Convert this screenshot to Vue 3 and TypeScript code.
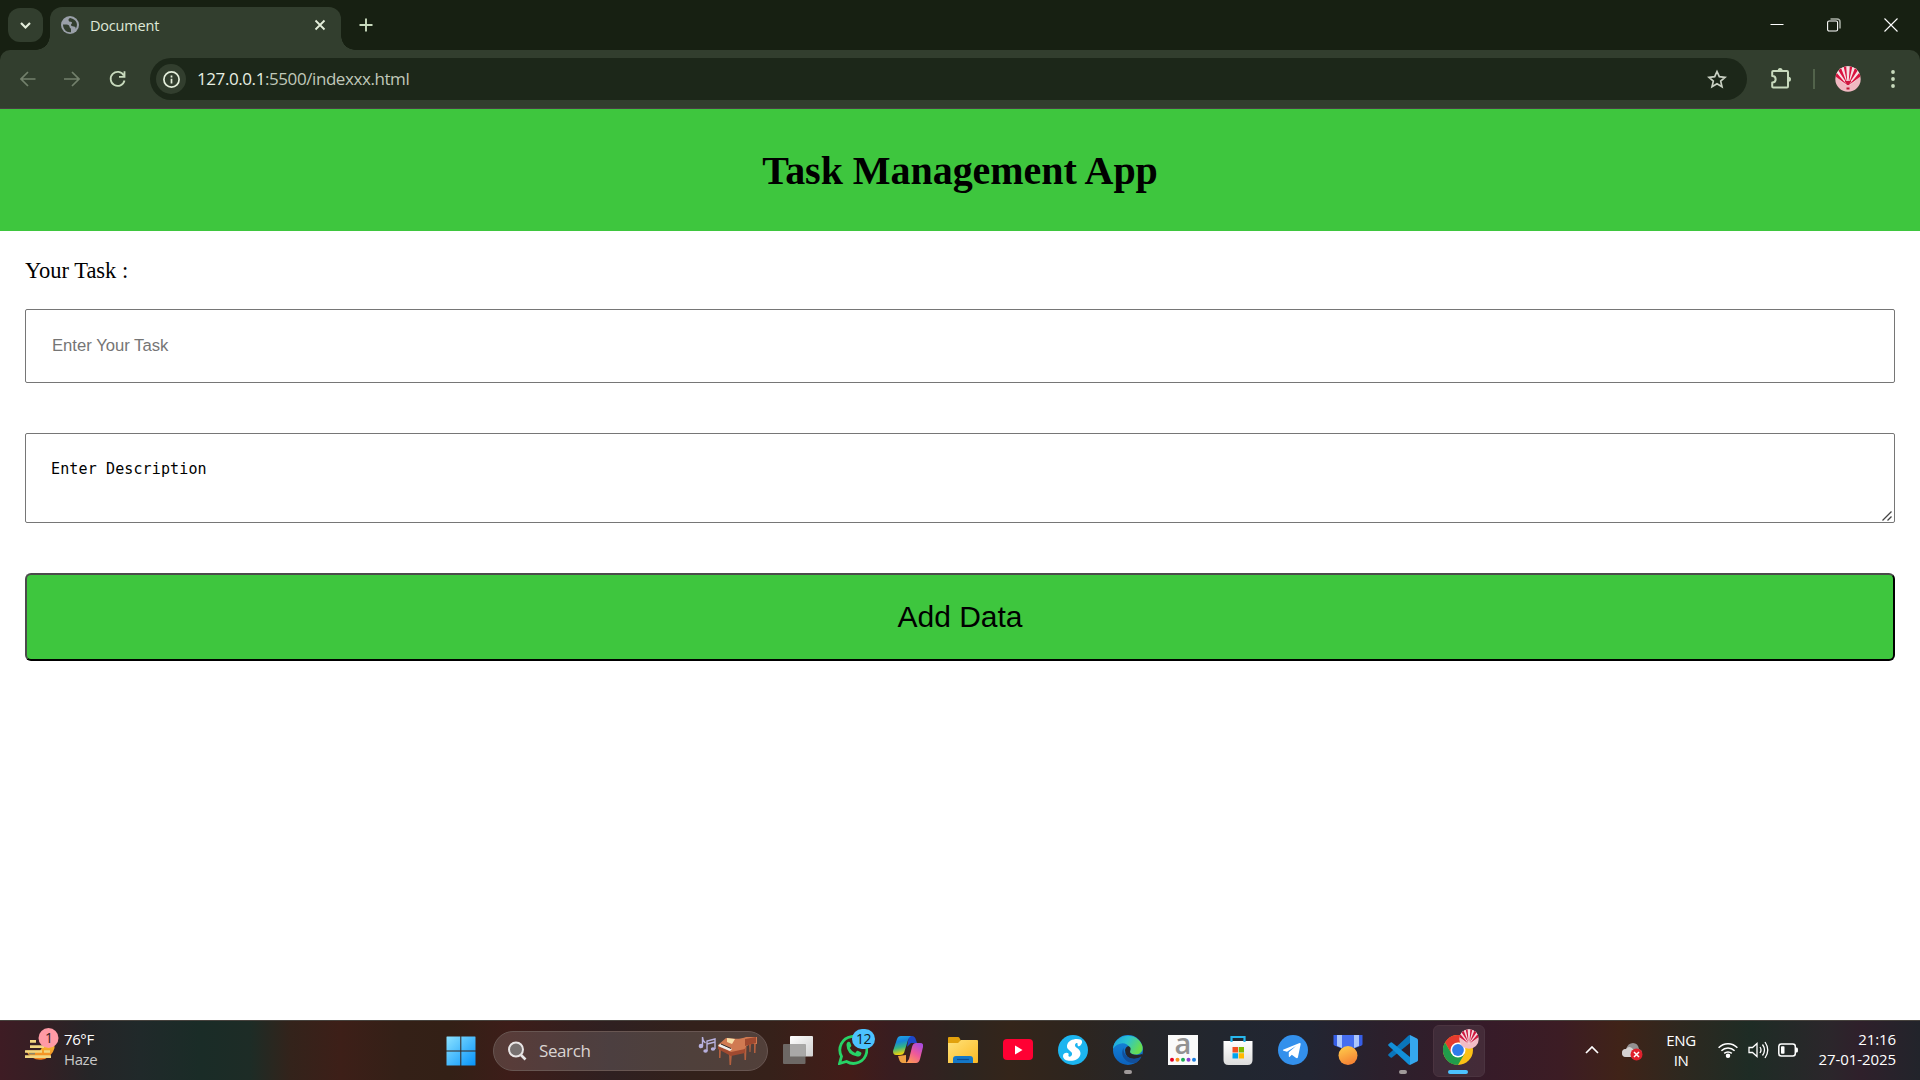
<script setup lang="ts">
import { ref } from 'vue'

const task = ref('')
const description = ref('Enter Description')
const dots = ['#e60023', '#f7931e', '#1aab54', '#8a3fd1', '#1a7fe0']
</script>

<template>
  <div class="screen">
    <div class="tabstrip">
      <button class="tabsearch"><svg width="35" height="34" viewBox="0 0 35 34"><path d="M13 15l4.500 4.500L22 15" fill="none" stroke="#e4eedb" stroke-width="2.200" /></svg></button>
      <div class="tab">
        <svg class="globe" width="18" height="18" viewBox="0 0 18 18"><circle cx="9" cy="9" r="9" fill="#9aa0a9" /><path d="M2 8.500h3.500c2 0 3 1 3 2.300 0 1.400 1.500 1 1.500 2.600v2.800c-4.500.6-8-3-8-7.700zM9.200 2C7.500 2.600 7 4 8 5.200c1 1.100 2.500.2 3 1.300.5 1.200-1.500 1.400-1 2.800.5 1.300 2.600.8 3.800 1.500 1 .6 1 1.400.8 2.200C17.500 9 16 3.500 9.200 2z" fill="#323e2e" /></svg>
        <span class="tabtitle">Document</span>
        <svg class="tabclose" width="12" height="12" viewBox="0 0 12 12"><path d="M1.500 1.500l9 9M10.500 1.500l-9 9" stroke="#e4eedb" stroke-width="1.800" /></svg>
      </div>
      <svg class="plus" width="14" height="14" viewBox="0 0 14 14"><path d="M7 .5v13M.5 7h13" stroke="#c8dabd" stroke-width="1.900" /></svg>
      <div class="wincontrols">
        <svg width="14" height="14" viewBox="0 0 14 14"><path d="M.5 6.500h13" stroke="#fff" /></svg>
        <svg width="14" height="14" viewBox="0 0 14 14"><path d="M3.500 1H10q3 0 3 3v6.500" fill="none" stroke="#aab0a7" stroke-width="1.500" /><rect x=".6" y="3" width="10" height="10" rx="1.500" fill="none" stroke="#fff" stroke-width="1.100" /></svg>
        <svg width="14" height="14" viewBox="0 0 14 14"><path d="M.5.5l13 13M13.500.5l-13 13" stroke="#fff" stroke-width="1.100" /></svg>
      </div>
    </div>

    <div class="toolbar">
      <svg class="back" width="16" height="16" viewBox="0 0 16 16"><path d="M15.500 8H1.500M8 1L1 8l7 7" fill="none" stroke="#73806c" stroke-width="1.700" /></svg>
      <svg class="forward" width="16" height="16" viewBox="0 0 16 16"><path d="M0 8h14.500M8 1l7 7-7 7" fill="none" stroke="#73806c" stroke-width="1.700" /></svg>
      <svg class="reload" width="18" height="18" viewBox="0 0 18 18"><path d="M14.800 5.500A7 7 0 1 0 15.500 10.500M15.500 1.300V6.800h-5.500" fill="none" stroke="#c8dabd" stroke-width="1.800" /></svg>
      <div class="omnibox">
        <span class="info"><svg width="17" height="17" viewBox="0 0 17 17"><circle cx="8.500" cy="8.500" r="7.600" fill="none" stroke="#e4eedb" stroke-width="1.700" /><path d="M8.500 7.800v4.700M8.500 4.500v1.900" stroke="#e4eedb" stroke-width="1.700" /></svg></span>
        <span class="url"><b>127.0.0.1</b>:5500/indexxx.html</span>
        <svg class="star" width="20" height="20" viewBox="0 0 20 20"><path d="M10 2.500l2.300 5.200 5.700.6-4.300 3.800 1.300 5.600-5-3-5 3 1.300-5.600L2 8.300l5.700-.6z" fill="none" stroke="#c9d0c3" stroke-width="1.700" /></svg>
      </div>
      <svg class="puzzle" width="22" height="22" viewBox="0 0 22 22"><path d="M3.200 4H17q1 0 1 1v14.500q0 1-1 1H3.200q-1 0-1-1V15.500c4.600 0 4.600-6.500 0-6.500V5q0-1 1-1z" fill="none" stroke="#c8dabd" stroke-width="2" stroke-linejoin="round" /><path d="M7.600 3.500a2.500 2.500 0 0 1 5 0zM18.500 9.700a2.500 2.500 0 0 1 0 5z" fill="#c8dabd" /></svg>
      <i class="divider" />
      <svg class="avatar" width="26" height="26" viewBox="0 0 26 26"><defs><clipPath id="avatarClip"><circle cx="13" cy="13" r="12.700" /></clipPath></defs><g clip-path="url(#avatarClip)"><rect width="26" height="26" fill="#f1b9c2" /><path d="M1 8Q2 0 13 0t12 8q-1 5-10 11h-4Q2 13 1 8z" fill="#f7dfe3" /><path d="M12 19L0 10l1-4zM12.300 18L3 4l3-2zM12.500 18L8.500 0h2.700l1.200 18zM13.500 18L14.800 0h2.700zM13.700 18L20 2l3 2zM14 19l11-13 1 4z" fill="#d9133f" /><path d="M9.500 15h7l-2.500 4h-2z" fill="#cf1840" /><path d="M11.500 21.500h3v2h-3z" fill="#bd1834" /></g></svg>
      <svg class="kebab" width="4" height="20" viewBox="0 0 4 20" fill="#c8dabd"><circle cx="2" cy="3" r="1.900" /><circle cx="2" cy="10" r="1.900" /><circle cx="2" cy="17" r="1.900" /></svg>
    </div>

    <main class="page">
      <header><h1>Task Management App</h1></header>
      <form @submit.prevent>
        <label for="task">Your Task :</label>
        <input id="task" v-model="task" type="text" placeholder="Enter Your Task">
        <div class="area">
          <textarea v-model="description" spellcheck="false" />
          <svg width="10" height="10" viewBox="0 0 10 10"><path d="M.5 9.500l9-9M5.500 9.500l4-4" stroke="#444" stroke-width="1.300" /></svg>
        </div>
        <button class="add">Add Data</button>
      </form>
    </main>

    <footer class="taskbar">
      <div class="weather">
        <svg width="36" height="37" viewBox="0 0 36 37"><defs><linearGradient id="sun" x2="0" y2="1"><stop stop-color="#f8c738" /><stop offset="1" stop-color="#f27c1c" /></linearGradient></defs><path d="M2 22.500h14l6-8.500h8q.5 2 .5 6a15 15 0 0 1-28.500 2.500z" fill="url(#sun)" /><path d="M5 25.500h6" stroke="#8c8768" stroke-width="2" /><g stroke="#f2d680" stroke-width="2.700"><path d="M6 13.400h6M6 18.600h14M1 23.500h17M20 23.500h6M1 28.700h26" /></g><circle cx="24.500" cy="10" r="10" fill="#ff9aa5" /></svg>
        <span class="badge1">1</span>
        <div class="wtext"><span>76°F</span><span class="haze">Haze</span></div>
      </div>

      <svg class="start" width="30" height="30" viewBox="0 0 30 30"><defs><linearGradient id="win" x2="1" y2="1"><stop stop-color="#8be2ff" /><stop offset="1" stop-color="#0693fa" /></linearGradient></defs><path d="M.5 1q0-.5.500-.5h13.300v14H.5zM15.300.5H29q.5 0 .5.500v13.500H15.300zM.5 15.500h13.800v14H1q-.5 0-.5-.5zM15.300 15.500h14.200V29q0 .5-.5.500H15.300z" fill="url(#win)" /></svg>

      <div class="search">
        <svg class="lens" width="20" height="20" viewBox="0 0 20 20"><circle cx="9" cy="8.500" r="7" fill="#777170" stroke="#e8e5e5" stroke-width="2" /><path d="M14 14l4.500 4.500" stroke="#e8e5e5" stroke-width="2.600" /></svg>
        <span>Search</span>
        <svg class="piano" width="60" height="32" viewBox="0 0 60 32">
          <g fill="#b8b1df" stroke="#b8b1df" stroke-width="1.400"><circle cx="3" cy="11" r="1.600" /><path d="M4.500 11V2q0 4 3 6" fill="none" /><ellipse cx="7.500" cy="16" rx="1.500" ry="1" /><ellipse cx="15" cy="14" rx="1.500" ry="1" /><path d="M9 16V6l8-2v10M9 9l8-2" fill="none" /></g>
          <g fill="#b4603f"><path d="M21 11h2l-.5 12h-1.500zM31 18h3l-1 12h-1.500zM46 12h2.500l-.5 13h-1.500zM51 8h2l-.5 9h-1zM56 5h2l-.5 13h-1.500z" /></g>
          <path d="M20 10l8-7q14 2 20-1l11 0v7q-8-1-12 4 0 4-13 5l-13-6z" fill="#d07a52" /><path d="M20 11l13 6 14-3v4l-14 3-13-7zM47 4l11-2v6l-11 3z" fill="#a04a30" /><path d="M29 3l8 1-3 5-5-2z" fill="#f7dfa8" /><path d="M22 9l12 5-2 2-12-5z" fill="#eee" /><path d="M23 9l10 4.500" stroke="#303030" />
        </svg>
      </div>

      <div class="apps">
        <div class="app"><svg viewBox="0 0 30 30"><defs><linearGradient id="tv" x2="1" y2="1"><stop stop-color="#fff" /><stop offset="1" stop-color="#d0d0d0" /></linearGradient></defs><rect x="7" y="1" width="23" height="20.500" rx="1" fill="url(#tv)" /><rect y="9" width="22.500" height="20" rx="1" fill="#6d6865" /><path d="M7 9h15.500v12.500H7z" fill="#a9a8a7" /></svg></div>
        <div class="app"><svg viewBox="0 0 30 30"><path d="M1.500 28.500l2-7.200a13.500 13.500 0 1 1 5 5.200z" fill="none" stroke="#27d366" stroke-width="2.800" /><path d="M8.500 10q0-3 2.300-3.200 1 0 1.300.8l1.100 2.700q.3.700-.2 1.300l-1.200 1.500q2 3.500 5.400 5l1.600-2q.4-.6 1-.3l3 1.400q.8.4.6 1.200-.6 3.200-4.200 3.200-10.500-2-10.700-11.600z" fill="#27d366" /></svg><span class="badge12">12</span></div>
        <div class="app"><svg viewBox="0 0 30 30"><defs><linearGradient id="ca" x2=".2" y2="1"><stop stop-color="#25a9e8" /><stop offset=".35" stop-color="#1585db" /><stop offset=".65" stop-color="#35b484" /><stop offset="1" stop-color="#efd30b" /></linearGradient><linearGradient id="cb" x1=".8" x2=".2" y2="1"><stop stop-color="#a84be0" /><stop offset=".5" stop-color="#ef5999" /><stop offset="1" stop-color="#ff9d50" /></linearGradient></defs><path d="M16 1h3q3 0 4 4l1 3h-6l-4 4z" fill="#1d47c9" /><path d="M13 28H10q-3 0-4-4l-1-3 8-1z" fill="#f0a143" /><path d="M8 1h10q-2 1-3 4l-4 13q-1 2-4 2H3q-3 0-3-4L4 4q1-3 4-3z" fill="url(#ca)" /><path d="M23 28H12q3-1 4-4l3-12q1-4 4-4h4q4 0 3 4l-3 12q-1 4-4 4z" fill="url(#cb)" /></svg></div>
        <div class="app"><svg viewBox="0 0 30 30"><defs><linearGradient id="fo" x2="1" y2="1"><stop stop-color="#ffe27a" /><stop offset="1" stop-color="#fbb924" /></linearGradient></defs><path d="M0 3q0-1 1-1h9q1 0 1.500 1L13 6v4H0z" fill="#e2a10c" /><path d="M0 8q1 0 3 0h7l3-3h16q1 0 1 1v21q0 1-1 1H0z" fill="url(#fo)" /><path d="M5 28v-4q0-3 3-3h14q3 0 3 3v4z" fill="#1478c8" /><path d="M9 24.500h12" stroke="#0b4c92" stroke-width="1.200" /></svg></div>
        <div class="app"><svg viewBox="0 0 30 30"><rect y="4" width="30" height="21" rx="4" fill="#ff0033" /><path d="M12 10.500v9l7.500-4.500z" fill="#fff" /></svg></div>
        <div class="app"><svg viewBox="0 0 30 30"><circle cx="15" cy="15" r="15" fill="#1cb5f0" /><path d="M22.500 4.500C18 3 10 4.500 9 10.500c-.8 5 6 5.500 5 9-.7 2.300-3 2.700-3.500 1.500-.3-1 .5-1.300 0-2.500-1-1.500-5.500-1-5.500 2.500 0 7 16.500 6.500 17.500-2 .6-5.500-6-6-5.500-9 .4-2 2.300-2.300 2.500-1.500.2 1-.3 1.500.5 2.500 2 1.500 6.500-4.500 2.500-6.500z" fill="#fff" /></svg></div>
        <div class="app"><svg viewBox="0 0 30 30"><defs><linearGradient id="ea" x2="1" y2=".4"><stop stop-color="#199de5" /><stop offset=".5" stop-color="#2bc4d1" /><stop offset="1" stop-color="#67dd51" /></linearGradient><linearGradient id="eb" x2="0" y2="1"><stop stop-color="#168ade" /><stop offset="1" stop-color="#0c62bd" /></linearGradient></defs><circle cx="15" cy="15" r="15" fill="url(#eb)" /><path d="M0 14C1-2 24-4 29 10c3 8-5 11-10 9-4-2-1-3-2-6C14 6 4 7 0 14z" fill="url(#ea)" /><path d="M12 15c1-4 4-5 5.500-2 .5 3-2 4 1.500 6q5 2 10 0l1 2q-4 3-8 3-10 0-10-9z" fill="#26252b" /><path d="M10.500 13c-4 7 2 16 12 15 4-2 5-5 5.500-6.500-8 5-18 1-17.500-8.500z" fill="#124f9a" /></svg><i class="run" /></div>
        <div class="app"><svg class="letter" viewBox="0 0 30 30"><path d="M0 0h30v30H0z" fill="#fafafa" /><text x="14.800" y="19" text-anchor="middle" font-family="Open Sans, sans-serif" font-size="29" font-weight="600" fill="#929292">a</text><circle v-for="(c, i) in dots" :key="c" :cx="4 + i * 5.500" cy="24.700" r="2" :fill="c" /></svg></div>
        <div class="app"><svg viewBox="0 0 30 30"><defs><linearGradient id="st" x2="0" y2="1"><stop stop-color="#fff" /><stop offset="1" stop-color="#dcdcdc" /></linearGradient></defs><path d="M.5 6h29v19q0 5-5 5h-19q-5 0-5-5z" fill="url(#st)" /><path d="M8.500 7V2h13v5" fill="none" stroke="#27b7ed" stroke-width="2.200" /><path d="M9.500 12H15v5.500H9.500z" fill="#f25022" /><path d="M15.700 12h5.300v5.500h-5.300z" fill="#7fba00" /><path d="M9.500 18.200H15v5.300H9.500z" fill="#00a4ef" /><path d="M15.700 18.200h5.300v5.300h-5.300z" fill="#ffb900" /></svg></div>
        <div class="app"><svg viewBox="0 0 30 30"><circle cx="15" cy="15" r="15" fill="#3390ec" /><path d="M5 14.800L21 8.200q2-.7 1.600 1.300L20 22q-.5 2-2.200.8l-4-3-2 2q-1 .8-1-1v-3.600L18 11l-9 5.700-3.500-1q-1-.4-.5-.9z" fill="#fff" /></svg></div>
        <div class="app"><svg viewBox="0 0 30 30"><defs><linearGradient id="me" x2=".4" y2="1"><stop stop-color="#ffd24d" /><stop offset="1" stop-color="#f68535" /></linearGradient></defs><path d="M.5 0h29v9q0 1-1 1.500L20 14H10L1.500 10.500q-1-.5-1-1.500z" fill="#365ee6" /><path d="M4 0h5v13L4 11zM21 0h5v11l-5 2z" fill="#acc6fb" /><path d="M9 0h12v12H9z" fill="#466ef0" /><circle cx="15" cy="20.500" r="9.500" fill="url(#me)" /></svg></div>
        <div class="app"><svg viewBox="0 0 30 30"><path d="M22 0l7 3.500q1 .5 1 1.700V25q0 1-1 1.500L22 30z" fill="#35a7ee" /><path d="M22 0v8L4 22.500q-.7.500-1.400 0L.5 20.700q-.7-.7 0-1.400L20 1q1-.8 2-1z" fill="#0a75bb" /><path d="M22 30v-8L4 7.500q-.7-.5-1.400 0L.5 9.300q-.7.700 0 1.400L20 29q1 .8 2 1z" fill="#128fd8" /></svg><i class="run" /></div>
        <div class="app active"><svg viewBox="0 0 30 30"><circle cx="15" cy="15" r="15" fill="#fbc116" /><path d="M2 7.500a15 15 0 0 1 26 0H15l-6.500 11.300z" fill="#e63b2e" /><path d="M2 7.500a15 15 0 0 0 13 22.500l6.500-11.300H8.500z" fill="#219c4b" /><circle cx="15" cy="15" r="7.500" fill="#fff" /><circle cx="15" cy="15" r="5.900" fill="#2f7ceb" /></svg>
          <svg class="miniavatar" viewBox="0 0 26 26"><g clip-path="url(#avatarClip)"><rect width="26" height="26" fill="#f1bcc5" /><path d="M1 8Q2 0 13 0t12 8q-1 5-10 11h-4Q2 13 1 8z" fill="#f5d7dc" /><path d="M12 19L0 10l1-4zM12.300 18L3 4l3-2zM12.500 18L8.500 0h2.700l1.200 18zM13.500 18L14.800 0h2.700zM13.700 18L20 2l3 2zM14 19l11-13 1 4z" fill="#cf1840" /></g></svg><i class="run on" /></div>
      </div>

      <div class="tray">
        <svg class="chev" width="14" height="8" viewBox="0 0 14 8"><path d="M1 7l6-6 6 6" fill="none" stroke="#fff" stroke-width="1.700" /></svg>
        <svg class="cloud" width="21" height="18" viewBox="0 0 21 18"><path d="M4 14a4 4 0 0 1 0-8Q6 0 11 0q5 0 6 6 3 1 3 4t-4 4z" fill="#929090" /><path d="M4 14a4 4 0 0 1 0-8q3-4 7 0l4 8z" fill="#d5d2d2" /><circle cx="14.500" cy="11.500" r="6" fill="#e0202c" /><path d="M12 9l5 5M17 9l-5 5" stroke="#fff" stroke-width="1.500" /></svg>
        <div class="lang"><span>ENG</span><span>IN</span></div>
        <svg class="wifi" width="20" height="16" viewBox="0 0 20 16" fill="none" stroke="#fff" stroke-width="1.500"><path d="M.6 5.800a13 13 0 0 1 18.800 0M3.400 8.700a9.200 9.200 0 0 1 13.200 0M6.200 11.400a5.500 5.500 0 0 1 7.600 0" /><circle cx="10" cy="13.700" r="1.500" fill="#fff" /></svg>
        <svg class="vol" width="21" height="18" viewBox="0 0 21 18" fill="none" stroke="#fff" stroke-width="1.300"><path d="M1 6.500h3.500L9 2.500v13l-4.500-4H1zM12 6q2 3 0 6M14.500 3.500q4 5.500 0 11M17 1q5.500 8 0 16" /></svg>
        <svg class="batt" width="20" height="14" viewBox="0 0 20 14"><rect x=".8" y="1" width="16.500" height="12" rx="2.500" fill="none" stroke="#fff" stroke-width="1.500" /><rect x="3" y="3.200" width="3.500" height="7.600" rx=".8" fill="#fff" /><path d="M18 4.500h1q1 0 1 2.500t-1 2.500h-1z" fill="#fff" /></svg>
        <div class="clock"><span>21:16</span><span>27-01-2025</span></div>
      </div>
    </footer>
  </div>
</template>

<style>
body { margin: 0; overflow: hidden; background: #fff; }
</style>

<style scoped>
.screen { width: 1920px; height: 1080px; display: flex; flex-direction: column; overflow: hidden; font-family: "Open Sans", sans-serif; background: linear-gradient(#172012 70px, #fff 70px); }
.screen * { box-sizing: border-box; }
svg { display: block; flex: none; }
button { padding: 0; }
.tabstrip { height: 50px; flex: none; display: flex; background: #172012; }
.tabsearch { width: 35px; height: 34px; margin: 8px 0 0 8px; border: 0; border-radius: 12px; background: #323e2e; }
.tab { position: relative; width: 291px; height: 43px; margin: 7px 0 0 7px; padding: 0 15px 7px 11px; display: flex; align-items: center; background: #323e2e; border-radius: 12px 12px 0 0; }
.tab::before, .tab::after { content: ""; position: absolute; bottom: 0; width: 14px; height: 14px; }
.tab::before { left: -14px; background: radial-gradient(circle at 0 0, transparent 13.500px, #323e2e 14px); }
.tab::after { right: -14px; background: radial-gradient(circle at 100% 0, transparent 13.500px, #323e2e 14px); }
.tabtitle { margin: 1px auto 0 11px; font-size: 14.500px; line-height: 20px; letter-spacing: -.2px; color: #dfe8d7; }
.plus { margin: 18px 0 0 18px; }
.wincontrols { margin: 18px 22px 0 auto; display: flex; gap: 43px; }
.toolbar { height: 59px; flex: none; display: flex; align-items: center; padding: 0 25px 0 20px; border-bottom: 1px solid #493f44; border-radius: 10px 10px 0 0; background: #323e2e; }
.forward { margin-left: 28px; }
.reload { margin-left: 29px; }
.omnibox { width: 1597px; height: 42px; margin-left: 23px; padding: 0 20px 0 6px; display: flex; align-items: center; border-radius: 21px; background: #1c2719; }
.info { width: 30px; height: 30px; display: flex; align-items: center; justify-content: center; border-radius: 50%; background: #323e2e; }
.url { margin: 0 auto 0 11px; font-size: 17px; line-height: 24px; letter-spacing: -.42px; color: #c0c9b9; }
.url b { font-weight: 400; color: #e8efe2; }
.puzzle { margin: -2px 0 0 23px; }
.divider { width: 2px; height: 20px; margin-left: 21px; background: #52634b; }
.avatar { margin-left: 20px; }
.kebab { margin-left: auto; }

.page { height: 911px; flex: none; background: #fff; }
header { height: 122px; padding-top: 39px; background: #3ec63e; }
h1 { margin: 0; font: 700 40px/46px "Liberation Serif", serif; letter-spacing: -.04px; text-align: center; color: #000; }
form { display: flex; flex-direction: column; padding: 25px 25px 0; }
label { height: 29px; font: 22.500px/29px "Liberation Serif", serif; color: #000; }
input { height: 74px; margin-top: 24px; padding: 0 26px; border: 1px solid #767676; border-radius: 2px; outline: 0; font: 16.670px "Liberation Sans", sans-serif; background: #fff; }
input::placeholder { color: #757575; opacity: 1; }
.area { position: relative; height: 90px; margin-top: 50px; }
textarea { display: block; width: 100%; height: 100%; padding: 25px; border: 1px solid #767676; border-radius: 2px; outline: 0; resize: none; overflow: hidden; font: 15px/20px "DejaVu Sans Mono", monospace; letter-spacing: .13px; color: #000; background: #fff; }
.area svg { position: absolute; right: 3px; bottom: 2px; }
.add { height: 88px; margin-top: 50px; padding-bottom: 1px; border: 2px solid #000; border-color: #4b4b4b #000 #000 #4b4b4b; border-radius: 6px; font: 30px "Liberation Sans", sans-serif; color: #000; background: #3ec63e; }

.taskbar { position: relative; height: 60px; flex: none; display: flex; align-items: center; color: #fff; border-top: 1px solid #46423d; background: linear-gradient(90deg, #3e1c24 0, #351f24 40px, #252527 90px, #20292a 140px, #1a2c27 200px, #1d2c26 250px, #33231b 290px, #3d1f18 340px, #342017 400px, #332016 450px, #3d1d19 510px, #2f2021 610px, #33211b 690px, #36211a 770px, #431c18 850px, #391d20 890px, #2d2520 960px, #34251a 1010px, #2e251e 1070px, #25262a 1150px, #212630 1240px, #222532 1310px, #2b202c 1380px, #361b29 1480px, #3c1c24 1560px, #402318 1620px, #2e281f 1680px, #1e2c25 1750px, #2b262b 1830px, #2f202b 1860px, #22242b 1920px); }
.weather { position: relative; width: 409px; height: 59px; padding: 7px 0 0 24px; display: flex; }
.badge1 { position: absolute; left: 39px; top: 7px; width: 20px; text-align: center; font-size: 14px; line-height: 20px; color: #361c20; }
.wtext { margin: 1px 0 0 4px; display: flex; flex-direction: column; font-size: 15px; line-height: 20px; letter-spacing: -.4px; }
.haze { color: #c8c8c8; }
.start { margin-left: 37px; }
.search { width: 275px; height: 40px; margin-left: 17px; padding: 0 10px 0 13px; display: flex; align-items: center; border: 1px solid #685652; border-radius: 20px; background: rgba(255,255,255,.14); }
.search span { margin: 0 auto 0 12px; font-size: 17px; letter-spacing: -.4px; color: #dad4d2; }
.piano { position: relative; left: 1px; }
.apps { display: flex; margin-left: 2px; }
.app { position: relative; width: 55px; height: 59px; padding-bottom: 1px; display: flex; align-items: center; justify-content: center; }
.app > svg { position: relative; width: 30px; height: 30px; }
.app > .letter { overflow: visible; }
.badge12 { position: absolute; left: 27px; top: 8px; width: 23px; height: 20px; border-radius: 10px; background: #4cc2ff; color: #101c24; text-align: center; font-size: 14px; line-height: 20px; letter-spacing: -.6px; }
.run { position: absolute; left: 24px; bottom: 6px; width: 8px; height: 4px; border-radius: 2px; background: #a09a9a; }
.run.on { left: 18px; width: 20px; background: #4cc2ff; }
.active::before { content: ""; position: absolute; left: 3px; top: 4px; width: 50px; height: 50px; border: 1px solid #4b3440; border-radius: 6px; background: rgba(255,255,255,.07); }
.app > .miniavatar { position: absolute; left: 29px; top: 8px; width: 20px; height: 20px; }
.tray { margin-left: auto; padding-right: 24px; display: flex; align-items: center; font-size: 15px; line-height: 20px; }
.chev { margin-top: -1px; }
.cloud { margin-left: 23px; margin-top: 3px; }
.lang { width: 30px; margin: -1px 0 0 23px; display: flex; flex-direction: column; align-items: center; letter-spacing: -.4px; }
.wifi { margin: -2px 0 0 22px; }
.vol { margin: -2px 0 0 10px; }
.batt { margin: -2px 0 0 9px; }
.clock { width: 80px; margin: -3px 0 0 18px; display: flex; flex-direction: column; align-items: flex-end; letter-spacing: -.08px; white-space: nowrap; }
</style>
